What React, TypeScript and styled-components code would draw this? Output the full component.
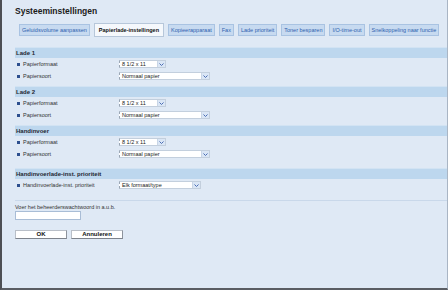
import React from "react";
import styled, { createGlobalStyle } from "styled-components";

const GlobalStyle = createGlobalStyle`
  html, body {
    margin: 0;
    padding: 0;
    background: #dfe9f5;
  }
  * {
    box-sizing: border-box;
  }
`;

const Page = styled.div`
  width: 448px;
  height: 290px;
  display: flex;
  flex-direction: column;
  padding-left: 13px;
  background: #dfe9f5;
  border-left: 2px solid #4d4f54;
  border-bottom: 2px solid #5a5d63;
  border-right: 1px solid #a9b5c4;
  font-family: "Liberation Sans", Arial, sans-serif;
  color: #333;
  overflow: hidden;
`;

const Title = styled.h1`
  margin: 6px 0 0;
  font-size: 8.5px;
  line-height: 10px;
  font-weight: bold;
  color: #1b1b1b;
`;

const TabBar = styled.div`
  margin-top: 7px;
  height: 14px;
  display: flex;
  align-items: center;
  gap: 4px;
  padding-left: 4px;
`;

const Tab = styled.div<{ $active?: boolean }>`
  height: ${(p) => (p.$active ? "14px" : "12px")};
  line-height: ${(p) => (p.$active ? "12px" : "10px")};
  padding: 0 ${(p) => (p.$active ? "4px" : "2px")};
  font-size: 5.5px;
  white-space: nowrap;
  font-weight: ${(p) => (p.$active ? "bold" : "normal")};
  color: ${(p) => (p.$active ? "#111" : "#2f5fae")};
  background: ${(p) => (p.$active ? "#f5f8fc" : "#c7daf0")};
  border: 1px solid ${(p) => (p.$active ? "#b7c7da" : "#a9c3e2")};
`;

const Panel = styled.div`
  margin-top: 10px;
  display: flex;
  flex-direction: column;
`;

const Section = styled.section<{ $gap?: number }>`
  margin-top: ${(p) => p.$gap ?? 0}px;
  padding-bottom: 4px;
`;

const SectionHeader = styled.div`
  height: 11px;
  line-height: 10px;
  padding-left: 1px;
  font-size: 6px;
  font-weight: bold;
  color: #1e2733;
  background: #bdd7ee;
  border-top: 1px solid #d2e3f3;
`;

const Row = styled.div`
  height: 12px;
  display: grid;
  grid-template-columns: 102px auto;
  align-items: center;
  padding-left: 2px;
`;

const Label = styled.div`
  display: flex;
  align-items: center;
  gap: 3px;
  font-size: 5.5px;
  color: #333;
  white-space: nowrap;
`;

const Bullet = styled.span`
  width: 3px;
  height: 3px;
  background: #2d4f8e;
`;

const Select = styled.div<{ $width: number }>`
  width: ${(p) => p.$width}px;
  height: 8px;
  display: flex;
  background: #fff;
  border: 1px solid #c3cfdd;
  border-left: 1px dashed #9aa6b4;
`;

const SelectText = styled.span`
  flex: 1;
  padding-left: 2px;
  font-size: 5.5px;
  line-height: 6px;
  color: #222;
  white-space: nowrap;
`;

const SelectArrow = styled.span`
  width: 8px;
  display: flex;
  align-items: center;
  justify-content: center;
  background: #dae6f5;
  border-left: 1px solid #c9d6e6;
`;

const Separator = styled.div`
  margin-top: 5px;
  height: 1px;
  background: #c9d8ea;
`;

const Prompt = styled.div`
  margin-top: 3px;
  font-size: 5.5px;
  line-height: 7px;
  color: #333;
`;

const PasswordInput = styled.div`
  width: 66px;
  height: 9px;
  background: #fff;
  border: 1px solid #a9bdd6;
`;

const Buttons = styled.div`
  margin-top: 10px;
  display: flex;
  gap: 4px;
`;

const Button = styled.div`
  width: 52px;
  height: 9px;
  line-height: 7px;
  text-align: center;
  font-size: 6px;
  font-weight: bold;
  color: #111;
  background: #fff;
  border: 1px solid #b9bfc8;
  border-bottom-color: #7d838c;
  border-right-color: #8d939c;
`;

const Chevron = () => (
  <svg width="5" height="3" viewBox="0 0 5 3">
    <path d="M0.5 0.5 L2.5 2.5 L4.5 0.5" fill="none" stroke="#4a6cb3" strokeWidth="1" />
  </svg>
);

const Dropdown = ({ value, width }: { value: string; width: number }) => (
  <Select $width={width}>
    <SelectText>{value}</SelectText>
    <SelectArrow>
      <Chevron />
    </SelectArrow>
  </Select>
);

const tabs = [
  "Geluidsvolume aanpassen",
  "Papierlade-instellingen",
  "Kopieerapparaat",
  "Fax",
  "Lade prioriteit",
  "Toner besparen",
  "I/O-time-out",
  "Snelkoppeling naar functie",
];

const trays = ["Lade 1", "Lade 2", "Handinvoer"];

const App = () => {
  return (
    <Page>
      <GlobalStyle />
      <Title>Systeeminstellingen</Title>
      <TabBar>
        {tabs.map((t) => (
          <Tab key={t} $active={t === "Papierlade-instellingen"}>
            {t}
          </Tab>
        ))}
      </TabBar>
      <Panel>
        {trays.map((tray) => (
          <Section key={tray}>
            <SectionHeader>{tray}</SectionHeader>
            <Row>
              <Label>
                <Bullet />
                Papierformaat
              </Label>
              <Dropdown value="8 1/2 x 11" width={47} />
            </Row>
            <Row>
              <Label>
                <Bullet />
                Papiersoort
              </Label>
              <Dropdown value="Normaal papier" width={91} />
            </Row>
          </Section>
        ))}
        <Section $gap={4}>
          <SectionHeader>Handinvoerlade-inst. prioriteit</SectionHeader>
          <Row>
            <Label>
              <Bullet />
              Handinvoerlade-inst. prioriteit
            </Label>
            <Dropdown value="Elk formaat/type" width={82} />
          </Row>
        </Section>
        <Separator />
        <Prompt>Voer het beheerderswachtwoord in a.u.b.</Prompt>
        <PasswordInput />
        <Buttons>
          <Button>OK</Button>
          <Button>Annuleren</Button>
        </Buttons>
      </Panel>
    </Page>
  );
};

export default App;
